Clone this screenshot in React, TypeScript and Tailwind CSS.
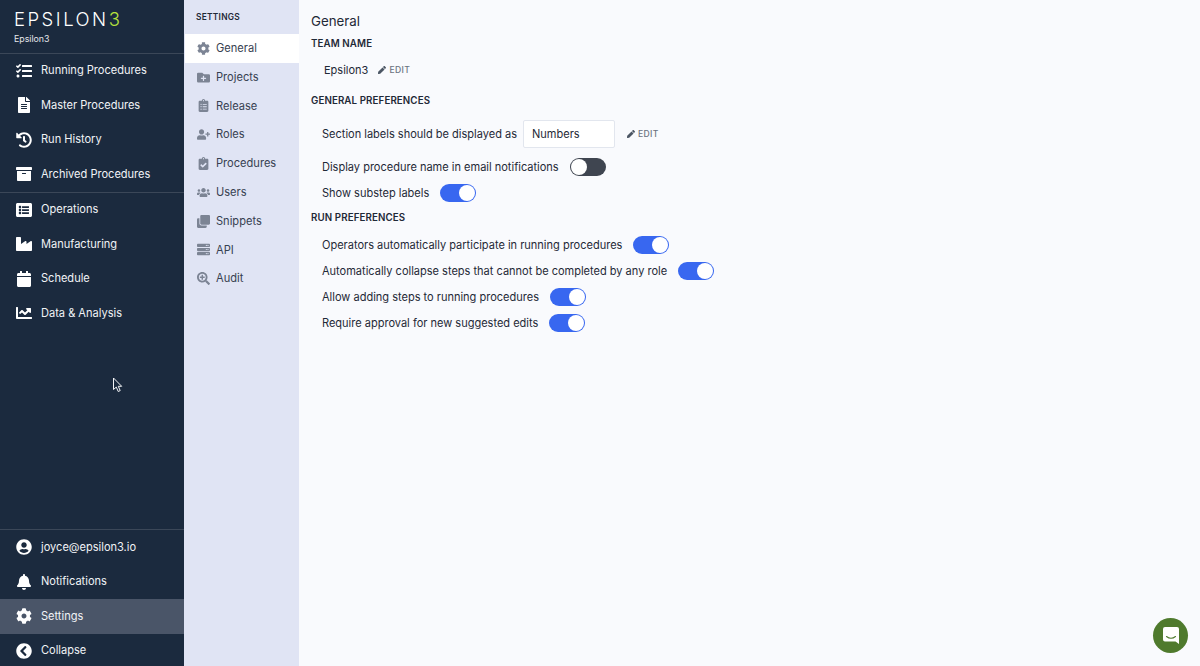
import React from 'react';
import {
  FaArchive,
  FaBell,
  FaCalendar,
  FaChartLine,
  FaChevronCircleLeft,
  FaClipboardCheck,
  FaClipboardList,
  FaClone,
  FaCog,
  FaFileAlt,
  FaFolderPlus,
  FaHistory,
  FaIndustry,
  FaListAlt,
  FaPen,
  FaSearchPlus,
  FaServer,
  FaTasks,
  FaUserCircle,
  FaUserPlus,
  FaUsers,
} from 'react-icons/fa';
import type { IconType } from 'react-icons';

interface NavItem {
  label: string;
  icon: IconType;
  active?: boolean;
}

const groupOne: NavItem[] = [
  { label: 'Running Procedures', icon: FaTasks },
  { label: 'Master Procedures', icon: FaFileAlt },
  { label: 'Run History', icon: FaHistory },
  { label: 'Archived Procedures', icon: FaArchive },
];

const groupTwo: NavItem[] = [
  { label: 'Operations', icon: FaListAlt },
  { label: 'Manufacturing', icon: FaIndustry },
  { label: 'Schedule', icon: FaCalendar },
  { label: 'Data & Analysis', icon: FaChartLine },
];

const groupThree: NavItem[] = [
  { label: 'joyce@epsilon3.io', icon: FaUserCircle },
  { label: 'Notifications', icon: FaBell },
  { label: 'Settings', icon: FaCog, active: true },
  { label: 'Collapse', icon: FaChevronCircleLeft },
];

const settingsItems: NavItem[] = [
  { label: 'General', icon: FaCog, active: true },
  { label: 'Projects', icon: FaFolderPlus },
  { label: 'Release', icon: FaClipboardList },
  { label: 'Roles', icon: FaUserPlus },
  { label: 'Procedures', icon: FaClipboardCheck },
  { label: 'Users', icon: FaUsers },
  { label: 'Snippets', icon: FaClone },
  { label: 'API', icon: FaServer },
  { label: 'Audit', icon: FaSearchPlus },
];

const SideRow = ({ item }: { item: NavItem }) => {
  const Icon = item.icon;
  return (
    <div className={`flex h-[34.5px] items-center pl-[15px] ${item.active ? 'bg-[#4a5568]' : ''}`}>
      <span className="flex w-[17px] justify-center">
        <Icon size={16} className="text-white" />
      </span>
      <span className="ml-[9px] text-[11.05px] text-[#f1f3f6]">{item.label}</span>
    </div>
  );
};

const SettingsRow = ({ item }: { item: NavItem }) => {
  const Icon = item.icon;
  return (
    <div className={`flex h-[28.8px] items-center pl-[11px] ${item.active ? 'bg-white' : ''}`}>
      <span className="flex w-[15px] justify-center">
        <Icon size={13} className="text-[#7c8494]" />
      </span>
      <span className="ml-[5px] text-[11.1px] text-[#374151]">{item.label}</span>
    </div>
  );
};

const Toggle = ({ on }: { on: boolean }) => (
  <span
    className={`flex h-[18px] w-[36px] shrink-0 items-center rounded-full p-[1px] ${
      on ? 'justify-end bg-[#3867f0]' : 'justify-start bg-[#3f4550]'
    }`}
  >
    <span className="h-[16px] w-[16px] rounded-full bg-white" />
  </span>
);

const EditButton = () => (
  <span className="flex items-center gap-[3px] text-[8.6px] font-medium tracking-[0.04em] text-[#6b7280]">
    <FaPen size={8} className="text-[#4b5563]" />
    EDIT
  </span>
);

const Heading = ({ children }: { children: React.ReactNode }) => (
  <h2 className="text-[9.75px] font-semibold leading-[14px] tracking-[0.01em] text-[#1f2937]">{children}</h2>
);

const PrefRow = ({ label, on }: { label: string; on: boolean }) => (
  <div className="flex h-[26px] items-center gap-[11px] pl-[11px]">
    <span className="text-[11.03px] text-[#1f2937]">{label}</span>
    <Toggle on={on} />
  </div>
);

export default function App() {
  return (
    <div
      className="relative flex h-[666px] w-full overflow-hidden bg-[#f9fafd]"
      style={{ fontFamily: 'Inter, "Liberation Sans", sans-serif' }}
    >
      <aside className="flex h-[668px] w-[184px] shrink-0 flex-col bg-[#1b2a3e]">
        <div className="h-[53.5px] border-b border-[#3b4758] pl-[14px] pt-[9px]">
          <div className="text-[18.5px] font-light leading-[20px] tracking-[0.135em] text-white">
            EPSILON<span className="text-[#b5e03c]">3</span>
          </div>
          <div className="mt-[4px] text-[8.8px] leading-[12px] text-[#e5e7eb]">Epsilon3</div>
        </div>
        <div className="border-b border-[#3b4758]">
          {groupOne.map((item) => (
            <SideRow key={item.label} item={item} />
          ))}
        </div>
        <div className="flex-1">
          {groupTwo.map((item) => (
            <SideRow key={item.label} item={item} />
          ))}
        </div>
        <div className="border-t border-[#3b4758]">
          {groupThree.map((item) => (
            <SideRow key={item.label} item={item} />
          ))}
        </div>
      </aside>

      <nav className="w-[115px] shrink-0 bg-[#e0e4f4] pl-[1px]">
        <div className="flex h-[34px] items-center pl-[11px] text-[8.4px] font-semibold tracking-[0.03em] text-[#1f2937]">
          SETTINGS
        </div>
        {settingsItems.map((item) => (
          <SettingsRow key={item.label} item={item} />
        ))}
      </nav>

      <main className="flex-1 pl-[12px] pt-[12px]">
        <h1 className="text-[13.3px] leading-[18px] text-[#1f2937]">General</h1>
        <div className="mt-[7px]">
          <Heading>TEAM NAME</Heading>
        </div>
        <div className="mt-[10px] flex h-[18px] items-center gap-[10px] pl-[13px]">
          <span className="text-[11px] text-[#1f2937]">Epsilon3</span>
          <EditButton />
        </div>
        <div className="mt-[15px]">
          <Heading>GENERAL PREFERENCES</Heading>
        </div>
        <div className="mt-[12px] flex h-[28px] items-center pl-[11px]">
          <span className="text-[11.03px] text-[#1f2937]">Section labels should be displayed as</span>
          <span className="ml-[6px] flex h-[28px] w-[92px] items-center rounded-[2px] border border-[#e2e6ee] bg-white pl-[8px] text-[11.03px] text-[#1f2937]">
            Numbers
          </span>
          <span className="ml-[12px]">
            <EditButton />
          </span>
        </div>
        <div className="mt-[6px]">
          <PrefRow label="Display procedure name in email notifications" on={false} />
          <PrefRow label="Show substep labels" on />
        </div>
        <div className="mt-[5px]">
          <Heading>RUN PREFERENCES</Heading>
        </div>
        <div className="mt-[7px]">
          <PrefRow label="Operators automatically participate in running procedures" on />
          <PrefRow label="Automatically collapse steps that cannot be completed by any role" on />
          <PrefRow label="Allow adding steps to running procedures" on />
          <PrefRow label="Require approval for new suggested edits" on />
        </div>
      </main>

      {/* mouse pointer caught in the capture */}
      <svg className="absolute left-[112px] top-[377px]" width="11" height="16" viewBox="0 0 11 16">
        <path d="M1.5 1v11.5l2.8-2.4 1.9 4.4 2-.9-1.9-4.3h3.4z" fill="#1b2a3e" stroke="#f3f4f6" strokeWidth="1" />
      </svg>

      {/* chat launcher */}
      <div className="absolute left-[1153px] top-[618px] flex h-[35px] w-[35px] items-center justify-center rounded-full bg-[#4f7a2d]">
        <svg width="16" height="17" viewBox="0 0 16 17">
          <path d="M2 0h12a2 2 0 0 1 2 2v15l-3.5-2.5H2a2 2 0 0 1-2-2V2a2 2 0 0 1 2-2z" fill="#fff" />
          <path d="M3.5 9.5c2.6 2 6.4 2 9 0" fill="none" stroke="#4f7a2d" strokeWidth="1.1" strokeLinecap="round" />
        </svg>
      </div>
    </div>
  );
}
